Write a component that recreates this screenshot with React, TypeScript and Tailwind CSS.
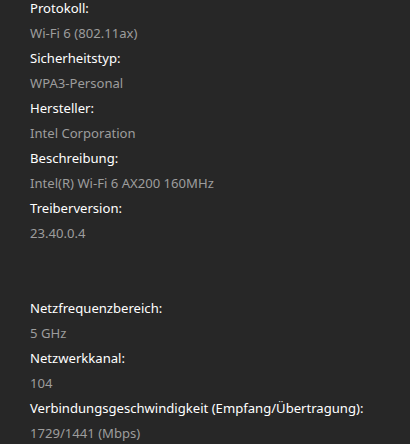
const groups: [string, string][][] = [
  [
    ['Protokoll:', 'Wi-Fi 6 (802.11ax)'],
    ['Sicherheitstyp:', 'WPA3-Personal'],
    ['Hersteller:', 'Intel Corporation'],
    ['Beschreibung:', 'Intel(R) Wi-Fi 6 AX200 160MHz'],
    ['Treiberversion:', '23.40.0.4'],
  ],
  [
    ['Netzfrequenzbereich:', '5 GHz'],
    ['Netzwerkkanal:', '104'],
    ['Verbindungsgeschwindigkeit (Empfang/Übertragung):', '1729/1441 (Mbps)'],
  ],
]

export default function App() {
  return (
    <div className="w-[410px] h-[444px] overflow-hidden bg-[#272727] font-['Noto_Sans',sans-serif] text-[13.1px] leading-[25px]">
      <div className="-mt-[4px] pl-[30px] flex flex-col gap-[50px]">
        {groups.map((g, i) => (
          <dl key={i}>
            {g.map(([label, value]) => (
              <div key={label}>
                <dt className="text-white">{label}</dt>
                <dd className="text-[#9d9d9d]">{value}</dd>
              </div>
            ))}
          </dl>
        ))}
      </div>
    </div>
  )
}
